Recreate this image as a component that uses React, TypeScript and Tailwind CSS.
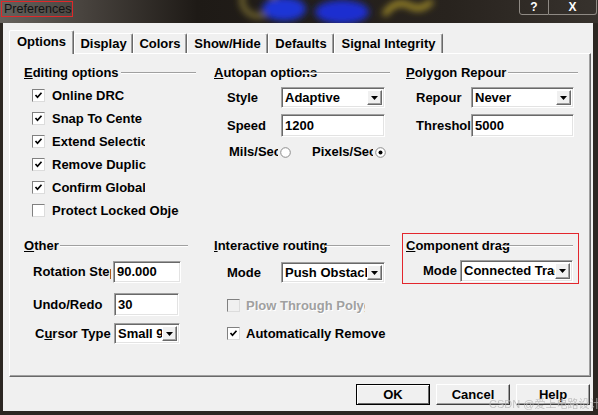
import React from "react";

const sunken =
  "border border-t-[#a0a0a0] border-l-[#a0a0a0] border-r-white border-b-white shadow-[inset_1px_1px_0_#696969,inset_-1px_-1px_0_#e3e3e3]";

function Lbl({ children, cls = "" }: { children: React.ReactNode; cls?: string }) {
  return (
    <div className={`shrink-0 overflow-hidden whitespace-nowrap text-[13px] font-bold leading-[16px] text-black ${cls}`}>
      {children}
    </div>
  );
}

function GroupHeader({ children, w, line }: { children: React.ReactNode; w: string; line: string }) {
  return (
    <div className={`relative h-[16px] text-[13px] font-bold leading-[16px] whitespace-nowrap text-black ${w}`}>
      {children}
      <div className={`absolute top-[7px] right-0 h-[2px] border-t border-t-[#a0a0a0] border-b border-b-white ${line}`} />
    </div>
  );
}

function Check({ label, checked = false, disabled = false, cls = "", gap = "ml-[7px]" }: { label: string; checked?: boolean; disabled?: boolean; cls?: string; gap?: string }) {
  return (
    <div className="flex items-center h-[23px]">
      <div
        className={`w-[13px] h-[13px] shrink-0 flex items-center justify-center border border-t-[#808080] border-l-[#808080] border-r-[#dcdcdc] border-b-[#dcdcdc] ${disabled ? "bg-[#f0f0f0]" : "bg-white"}`}
      >
        {checked && (
          <svg width="9" height="9" viewBox="0 0 9 9">
            <path d="M1.5 4 L3.5 6.2 L7.5 1.8" fill="none" stroke="#000" strokeWidth="1.7" />
          </svg>
        )}
      </div>
      <span
        className={`${gap} overflow-hidden whitespace-nowrap text-[13px] font-bold leading-[16px] ${disabled ? "text-[#a0a0a0] [text-shadow:1px_1px_0_#fff]" : "text-black"} ${cls}`}
      >
        {label}
      </span>
    </div>
  );
}

function Radio({ on = false }: { on?: boolean }) {
  return (
    <svg width="11" height="11" viewBox="0 0 11 11" className="shrink-0 ml-[2px]">
      <circle cx="5.5" cy="5.5" r="4.8" fill="#fff" stroke="#8a8a8a" />
      {on && <circle cx="5.5" cy="5.5" r="2" fill="#000" />}
    </svg>
  );
}

function Edit({ value, cls }: { value: string; cls: string }) {
  return (
    <div className={`bg-white flex items-center pl-[3px] ${sunken} ${cls}`}>
      <span className="text-[13px] font-bold leading-[16px] text-black whitespace-nowrap">{value}</span>
    </div>
  );
}

function Combo({ value, cls }: { value: string; cls: string }) {
  return (
    <div className={`bg-white flex p-[2px] ${sunken} ${cls}`}>
      <div className="flex-1 flex items-center overflow-hidden whitespace-nowrap pl-[1px] text-[13px] font-bold leading-[16px] text-black">
        {value}
      </div>
      <div className="w-[15px] shrink-0 flex items-center justify-center bg-[#f0f0f0] border border-t-white border-l-white border-r-[#696969] border-b-[#696969] shadow-[inset_-1px_-1px_0_#a0a0a0]">
        <svg width="7" height="4" viewBox="0 0 7 4">
          <path d="M0 0 H7 L3.5 4 Z" fill="#000" />
        </svg>
      </div>
    </div>
  );
}

function Tab({ label, active = false, w }: { label: string; active?: boolean; w: string }) {
  return (
    <div
      className={`${w} flex items-center justify-center text-[13px] font-bold text-black bg-[#f0f0f0] border-t border-l border-white border-r border-r-[#696969] shadow-[inset_-1px_0_0_#a0a0a0] rounded-t-[2px] ${active ? "h-[24px] -mb-[1px] relative z-10 pb-[2px]" : "h-[20px]"}`}
    >
      {label}
    </div>
  );
}

function Btn({ label, def = false }: { label: string; def?: boolean }) {
  return (
    <div
      className={`w-[74px] h-[21px] flex items-center justify-center text-[13px] font-bold text-black bg-[#f0f0f0] border ${def ? "border-black shadow-[inset_1px_1px_0_#fff,inset_-1px_-1px_0_#696969]" : "border-t-white border-l-white border-r-[#404040] border-b-[#404040] shadow-[inset_-1px_-1px_0_#a0a0a0]"}`}
    >
      {label}
    </div>
  );
}

export default function App() {
  return (
    <div className="relative w-[598px] h-[415px] overflow-hidden bg-[#2c2722] flex flex-col font-['Liberation_Sans',Arial,sans-serif]">
      {/* title bar */}
      <div className="relative h-[23px] shrink-0">
        <svg className="absolute inset-0" width="598" height="23" viewBox="0 0 598 23">
          <defs>
            <linearGradient id="tb" x1="0" x2="1" y1="0" y2="0">
              <stop offset="0" stopColor="#66625d" />
              <stop offset="0.14" stopColor="#48433e" />
              <stop offset="0.33" stopColor="#1e1a16" />
              <stop offset="0.75" stopColor="#28231e" />
              <stop offset="1" stopColor="#37322d" />
            </linearGradient>
            <filter id="bl">
              <feGaussianBlur stdDeviation="3.5" />
            </filter>
          </defs>
          <rect width="598" height="23" fill="url(#tb)" />
          <g filter="url(#bl)">
            <circle cx="258" cy="0" r="16" fill="none" stroke="#8d7f35" strokeWidth="4" />
            <ellipse cx="284" cy="9" rx="22" ry="12" fill="#1f34d6" />
            <ellipse cx="342" cy="12" rx="27" ry="12" fill="#1a2dd0" />
            <path d="M384 15 Q396 -2 410 6 Q421 12 432 1" fill="none" stroke="#b39c2c" strokeWidth="5" />
          </g>
        </svg>
        <div className="relative flex items-start h-full">
          <div className="ml-[1px] mt-[1px] w-[72px] h-[16px] border border-[#e0282a] flex items-center pl-[2px] text-[12.5px] text-[#121212]">
            Preferences
          </div>
          <div className="ml-auto mr-[1px] flex -mt-[2px]">
            <div className="w-[30px] h-[17px] flex items-center justify-center border border-[#8f8a84] rounded-bl-[3px] text-[12px] font-bold text-white">
              ?
            </div>
            <div className="w-[48px] h-[17px] flex items-center justify-center border border-l-0 border-[#8f8a84] rounded-br-[3px] text-[12px] font-bold text-white">
              X
            </div>
          </div>
        </div>
      </div>

      {/* client */}
      <div className="ml-[3px] w-[590px] h-[388px] bg-[#f0f0f0] flex flex-col">
        <div className="ml-[6px] mt-[7px] h-[23px] flex items-end">
          <Tab label="Options" active w="w-[65px]" />
          <Tab label="Display" w="w-[59px]" />
          <Tab label="Colors" w="w-[54px]" />
          <Tab label="Show/Hide" w="w-[81px]" />
          <Tab label="Defaults" w="w-[66px]" />
          <Tab label="Signal Integrity" w="w-[109px]" />
        </div>

        <div className="ml-[6px] w-[582px] h-[324px] border border-t-white border-l-white border-r-[#696969] border-b-[#696969] shadow-[inset_-1px_-1px_0_#a0a0a0] pt-[11px] pl-[14px] flex flex-col">
          {/* row 1 */}
          <div className="h-[173px] grid grid-cols-[190px_192px_172px]">
            <div className="flex flex-col">
              <GroupHeader w="w-[172px]" line="left-[97px]">
                <span className="underline">E</span>diting options
              </GroupHeader>
              <div className="pt-[3px] pl-[8px] flex flex-col">
                <Check label="Online DRC" checked cls="w-[93px]" />
                <Check label="Snap To Center" checked cls="w-[90px]" />
                <Check label="Extend Selection" checked cls="w-[93px]" />
                <Check label="Remove Duplicates" checked cls="w-[94px]" />
                <Check label="Confirm Global Edit" checked cls="w-[93px]" />
                <Check label="Protect Locked Objects" cls="w-[127px]" />
              </div>
            </div>

            <div className="flex flex-col">
              <GroupHeader w="w-[176px]" line="left-[88px]">
                <span className="underline">A</span>utopan options
              </GroupHeader>
              <div className="mt-[6px] flex items-center h-[21px]">
                <Lbl cls="w-[67px] pl-[13px]">Style</Lbl>
                <Combo value="Adaptive" cls="w-[104px] h-[21px]" />
              </div>
              <div className="mt-[6px] flex items-center h-[23px]">
                <Lbl cls="w-[67px] pl-[13px]">Speed</Lbl>
                <Edit value="1200" cls="w-[104px] h-[23px]" />
              </div>
              <div className="mt-[6px] flex items-center h-[18px] pl-[15px]">
                <Lbl cls="w-[49px]">Mils/Sec</Lbl>
                <Radio />
                <Lbl cls="w-[61px] ml-[21px]">Pixels/Sec</Lbl>
                <Radio on />
              </div>
            </div>

            <div className="flex flex-col">
              <GroupHeader w="w-[172px]" line="left-[102px]">
                <span className="underline">P</span>olygon Repour
              </GroupHeader>
              <div className="mt-[6px] flex items-center h-[21px]">
                <Lbl cls="w-[65px] pl-[10px]">Repour</Lbl>
                <Combo value="Never" cls="w-[103px] h-[21px]" />
              </div>
              <div className="mt-[6px] flex items-center h-[23px]">
                <Lbl cls="w-[65px] pl-[10px]">Threshold</Lbl>
                <Edit value="5000" cls="w-[103px] h-[23px]" />
              </div>
            </div>
          </div>

          {/* row 2 */}
          <div className="grid grid-cols-[190px_192px_172px]">
            <div className="flex flex-col">
              <GroupHeader w="w-[164px]" line="left-[36px]">
                <span className="underline">O</span>ther
              </GroupHeader>
              <div className="mt-[7px] flex items-center h-[22px]">
                <Lbl cls="w-[87px] pl-[9px] mr-[2px]">Rotation Step</Lbl>
                <Edit value="90.000" cls="w-[68px] h-[22px]" />
              </div>
              <div className="mt-[10px] flex items-center h-[23px]">
                <Lbl cls="w-[90px] pl-[9px]">Undo/Redo</Lbl>
                <Edit value="30" cls="w-[65px] h-[23px]" />
              </div>
              <div className="mt-[7px] flex items-center h-[21px]">
                <Lbl cls="w-[90px] pl-[11px]">
                  C<span className="underline">u</span>rsor Type
                </Lbl>
                <Combo value="Small 90" cls="w-[66px] h-[21px]" />
              </div>
            </div>

            <div className="flex flex-col">
              <GroupHeader w="w-[176px]" line="left-[111px]">
                <span className="underline">I</span>nteractive routing
              </GroupHeader>
              <div className="mt-[8px] flex items-center h-[21px]">
                <Lbl cls="w-[67px] pl-[13px]">Mode</Lbl>
                <Combo value="Push Obstacle" cls="w-[104px] h-[21px]" />
              </div>
              <div className="mt-[11px] pl-[13px]">
                <Check label="Plow Through Polygons" disabled gap="ml-[6px]" cls="w-[119px]" />
              </div>
              <div className="mt-[5px] pl-[13px]">
                <Check label="Automatically Remove Loops" checked gap="ml-[6px]" cls="w-[141px]" />
              </div>
            </div>

            <div className="flex flex-col">
              <div className="-ml-[4px] -mt-[5px] w-[177px] h-[51px] border border-[#e3262d] pl-[3px] pt-[4px] flex flex-col">
                <GroupHeader w="w-[167px]" line="left-[95px]">
                  <span className="underline">C</span>omponent drag
                </GroupHeader>
                <div className="mt-[6px] flex items-center h-[22px]">
                  <Lbl cls="w-[54px] pl-[17px]">Mode</Lbl>
                  <Combo value="Connected Tracks" cls="w-[113px] h-[22px]" />
                </div>
              </div>
            </div>
          </div>
        </div>

        <div className="mt-[7px] pr-[3px] flex justify-end gap-[6px]">
          <Btn label="OK" def />
          <Btn label="Cancel" />
          <Btn label="Help" />
        </div>
      </div>

      {/* watermark */}
      <div className="absolute left-[489px] top-[398px] text-[11px] leading-[12px] text-[#b8b8b8] opacity-80 whitespace-nowrap font-['Liberation_Sans','Noto_Sans_CJK_SC',sans-serif]">
        CSDN @爱上电路设计
      </div>
    </div>
  );
}
